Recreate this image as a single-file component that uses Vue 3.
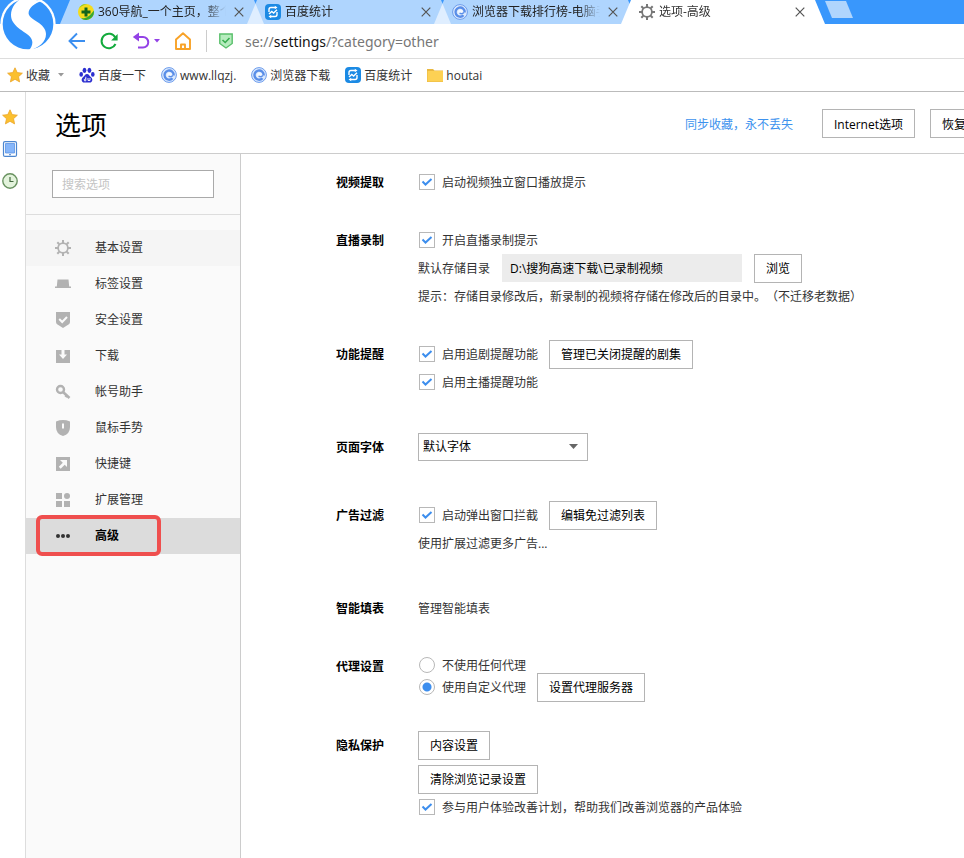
<script setup>
import { ref } from 'vue'

const tabs = [
  { icon: 'nav360', title: '360导航_一个主页，整个' },
  { icon: 'stats', title: '百度统计' },
  { icon: 'swirl', title: '浏览器下载排行榜-电脑手' },
  { icon: 'gear', title: '选项-高级', active: true },
]

const bookmarks = [
  { icon: 'star', title: '收藏', menu: true },
  { icon: 'paw', title: '百度一下' },
  { icon: 'swirl', title: 'www.llqzj.' },
  { icon: 'swirl', title: '浏览器下载' },
  { icon: 'stats', title: '百度统计' },
  { icon: 'folder', title: 'houtai' },
]

const categories = [
  { icon: 'gear', title: '基本设置', hover: true },
  { icon: 'tab', title: '标签设置' },
  { icon: 'shield', title: '安全设置' },
  { icon: 'download', title: '下载' },
  { icon: 'key', title: '帐号助手' },
  { icon: 'mouse', title: '鼠标手势' },
  { icon: 'shortcut', title: '快捷键' },
  { icon: 'grid', title: '扩展管理' },
  { icon: 'dots', title: '高级', current: true },
]

const keyword = ref('')
const videoPopup = ref(true)
const liveRecord = ref(true)
const savePath = ref('D:\\搜狗高速下载\\已录制视频')
const seriesReminder = ref(true)
const anchorReminder = ref(true)
const font = ref('默认字体')
const popupBlock = ref(true)
const proxy = ref('custom')
const experience = ref(true)
</script>

<template>
  <svg class="symbols" aria-hidden="true">
    <symbol id="i-nav360" viewBox="0 0 16 16">
      <circle cx="8" cy="8" r="8" fill="#f4dc1c" />
      <path d="M15.800 6.500A8 8 0 0 1 3 14.200C8 15 12 12 15.800 6.500z" fill="#38a832" />
      <path d="M1 4.500A8 8 0 0 1 9 .1C6 1 3 2.500 1 4.500z" fill="#8fca2a" />
      <path d="M6.500 3.500h3v3h3v3h-3v3h-3v-3h-3v-3h3z" fill="#12651c" />
    </symbol>
    <symbol id="i-stats" viewBox="0 0 16 16">
      <rect width="16" height="16" rx="4" fill="#1b8ae4" />
      <path d="M4 8V5.500q0-2 2-2h4M12 8v2.500q0 2-2 2H6" fill="none" stroke="#fff" stroke-width="1.400" />
      <path d="M9.800 1.800l2.700 1.700-2.700 1.800zM6.200 10.700l-2.700 1.800 2.700 1.700z" fill="#fff" />
      <path d="M4 10l2.800-2.500 1.800 1.500L12 5.800" fill="none" stroke="#fff" stroke-width="1.400" />
    </symbol>
    <symbol id="i-swirl" viewBox="0 0 16 16">
      <circle cx="8" cy="8" r="7.400" fill="#dceafd" stroke="#6b9bec" stroke-width="1" />
      <path d="M11.500 11.200A4.600 4.600 0 1 1 12.700 8.500" fill="none" stroke="#5a8ee8" stroke-width="2.400" />
      <circle cx="8.500" cy="8" r="2.400" fill="#f4f9ff" />
      <path d="M7.500 9.200q2.500 1.200 4.500-.7" fill="none" stroke="#5a8ee8" stroke-width="1.400" />
    </symbol>
    <symbol id="i-gear" viewBox="0 0 16 16">
      <g stroke="currentColor" fill="none">
        <circle cx="8" cy="8" r="4.900" stroke-width="1.800" />
        <path d="M8 0v3M8 13v3M0 8h3M13 8h3M2.300 2.300l2 2M11.700 11.700l2 2M2.300 13.700l2-2M11.700 4.300l2-2" stroke-width="2" />
      </g>
    </symbol>
    <symbol id="i-star" viewBox="0 0 16 16">
      <path d="M8 .8l2.200 4.800 5.200.6-3.900 3.500 1.100 5.200L8 12.300l-4.600 2.600 1.100-5.200L.6 6.200l5.200-.6z" fill="#fbc02f" stroke="#eba42a" stroke-width=".8" stroke-linejoin="round" />
    </symbol>
    <symbol id="i-paw" viewBox="0 0 16 16">
      <g fill="#2c2fd0">
        <ellipse cx="5.500" cy="3.300" rx="1.900" ry="2.600" />
        <ellipse cx="10.400" cy="3.300" rx="1.900" ry="2.600" />
        <ellipse cx="2.200" cy="7.400" rx="1.800" ry="2.400" />
        <ellipse cx="13.800" cy="7.400" rx="1.800" ry="2.400" />
        <path d="M8 7c2 0 2.500 2 4 3.200 2.400 1.900 1.400 5.300-1.200 5.300H5.200C2.600 15.500 1.600 12.100 4 10.200 5.500 9 6 7 8 7z" />
      </g>
      <path d="M6.800 9.800v4H5.500q-1.200-1.300 1.300-2.200M9 11v2.500h2V11" fill="none" stroke="#fff" stroke-width=".9" />
    </symbol>
    <symbol id="i-folder" viewBox="0 0 16 16">
      <path d="M0 2h6l1.500 1.500H16V15H0z" fill="#e9b840" />
      <path d="M.5 4H16v10.500H.5z" fill="#fdd154" />
    </symbol>
    <symbol id="i-tab" viewBox="0 0 16 16">
      <path d="M2.500 3.500h11l.7 7H16V12H0v-1.500h1.800z" fill="currentColor" />
    </symbol>
    <symbol id="i-shield" viewBox="0 0 16 16">
      <path d="M1 0h14v10q0 1.500-1.500 2.500L8 16l-5.500-3.500Q1 11.500 1 10z" fill="currentColor" />
      <path d="M4.200 7l3 3 4.800-5" fill="none" stroke="#fafafa" stroke-width="2" />
    </symbol>
    <symbol id="i-download" viewBox="0 0 16 16">
      <path d="M1 2h5.500v4.500H4L8 11l4-4.500H9.500V2H15v13H1z" fill="currentColor" />
    </symbol>
    <symbol id="i-key" viewBox="0 0 16 16">
      <circle cx="5.500" cy="5.500" r="3.500" fill="none" stroke="currentColor" stroke-width="2.400" />
      <path d="M8 8l6.500 6M10.500 13l2-2.200" fill="none" stroke="currentColor" stroke-width="2.600" />
    </symbol>
    <symbol id="i-mouse" viewBox="0 0 16 16">
      <path d="M1 1.500Q8-1.300 15 1.500V7q0 7-7 9-7-2-7-9z" fill="currentColor" />
      <path d="M7 3.500h2v5H7z" fill="#fafafa" />
    </symbol>
    <symbol id="i-shortcut" viewBox="0 0 16 16">
      <path d="M1 1h14v14H1z" fill="currentColor" />
      <path d="M5 4h7v7l-2.300-2.300-4 4-1.900-1.900 4-4z" fill="#fafafa" />
    </symbol>
    <symbol id="i-grid" viewBox="0 0 16 16">
      <path d="M1 1h6v6H1zM1 9h6v6H1zM9 9h6v6H9z" fill="currentColor" />
      <circle cx="12" cy="4" r="3" fill="currentColor" />
    </symbol>
    <symbol id="i-dots" viewBox="0 0 16 16">
      <g fill="#333"><circle cx="3" cy="8" r="2" /><circle cx="8" cy="8" r="2" /><circle cx="13" cy="8" r="2" /></g>
    </symbol>
  </svg>

  <div class="browser">
    <svg class="logo" viewBox="0 0 174 162" aria-label="搜狗浏览器" role="img">
      <circle cx="84" cy="72" r="83" fill="#fff" />
      <circle cx="84" cy="72" r="76" fill="#3393fb" />
      <path d="M128 2C100 10 84 26 86 42C90 60 138 70 138 102C138 126 118 142 84 154C98 140 102 124 90 110C74 94 32 78 33 44C34 22 46 8 62 -4z" fill="#fff" />
    </svg>

    <nav class="tabs" aria-label="标签页">
      <div v-for="tab in tabs" :key="tab.title" class="tab" :class="{ active: tab.active }">
        <svg class="icon"><use :href="'#i-' + tab.icon" /></svg>
        <span class="tab-title">{{ tab.title }}</span>
        <button class="close" aria-label="关闭">
          <svg viewBox="0 0 10 10"><path d="M.7.7l8.600 8.600M9.300.7L.7 9.300" stroke="#555" stroke-width="1.200" /></svg>
        </button>
      </div>
      <button class="new-tab" aria-label="新建标签"></button>
    </nav>

    <div class="toolbar">
      <button class="tool" aria-label="后退">
        <svg viewBox="0 0 18 18"><path d="M17 9H2M9 1.500L1.500 9 9 16.500" fill="none" stroke="#3b8ff0" stroke-width="1.900" /></svg>
      </button>
      <button class="tool" aria-label="刷新">
        <svg viewBox="0 0 18 18"><path d="M15.300 5.500A7.300 7.300 0 1 0 15.500 12" fill="none" stroke="#12aa3c" stroke-width="2" /><path d="M17.600 2v6.500h-6.500z" fill="#12aa3c" /></svg>
      </button>
      <button class="tool undo" aria-label="撤销">
        <svg viewBox="0 0 18 18"><path d="M4 5h7a5 5 0 0 1 0 10.500H6" fill="none" stroke="#9342e6" stroke-width="2" /><path d="M7 .5V9.500L.8 5z" fill="#9342e6" /></svg>
        <svg class="caret" viewBox="0 0 6 4"><path d="M0 0h6L3 3.500z" fill="#9342e6" /></svg>
      </button>
      <button class="tool" aria-label="主页">
        <svg viewBox="0 0 18 18"><path d="M2 7.500L9 1.200l7 6.300V17H2zM7 17v-4.500h4V17" fill="none" stroke="#f8a227" stroke-width="1.900" stroke-linejoin="round" /></svg>
      </button>
      <div class="address">
        <svg class="secure" viewBox="0 0 14 16"><path d="M.8 1h12.400v9.500L7 15 .8 10.500z" fill="#b6ecbe" stroke="#59bf6b" stroke-width="1.400" /><path d="M3.500 7l2.700 2.500L10.500 5" fill="none" stroke="#37ad4f" stroke-width="1.600" /></svg>
        <span class="url">se://<b>settings</b>/?category=other</span>
      </div>
    </div>

    <nav class="bookmarks" aria-label="收藏栏">
      <a v-for="mark in bookmarks" :key="mark.title" href="#" class="bookmark">
        <svg class="icon"><use :href="'#i-' + mark.icon" /></svg>
        <span>{{ mark.title }}</span>
        <svg v-if="mark.menu" class="caret" viewBox="0 0 6 4"><path d="M0 0h6L3 3.500z" fill="#999" /></svg>
      </a>
    </nav>

    <div class="body">
      <aside class="rail">
        <button aria-label="收藏"><svg class="icon"><use href="#i-star" /></svg></button>
        <button aria-label="手机">
          <svg class="icon" viewBox="0 0 16 16"><rect x="1.500" y=".6" width="13" height="14.800" rx="1.500" fill="#fff" stroke="#4d86cf" stroke-width="1.200" /><path d="M3.500 2.500h9v9.500h-9z" fill="#86b6fa" stroke="#5b93e3" stroke-width=".8" /><path d="M7 13.700h2" stroke="#4d86cf" /></svg>
        </button>
        <button aria-label="历史">
          <svg class="icon" viewBox="0 0 16 16"><circle cx="8" cy="8" r="7.200" fill="#e3f3dc" stroke="#699260" stroke-width="1.400" /><path d="M8 4v4.500h3.500" fill="none" stroke="#446a40" stroke-width="1.200" /></svg>
        </button>
      </aside>

      <div class="page">
        <header class="header">
          <h1>选项</h1>
          <div class="header-actions">
            <a href="#">同步收藏，永不丢失</a>
            <button class="btn">Internet选项</button>
            <button class="btn">恢复</button>
          </div>
        </header>

        <div class="columns">
          <aside class="sidebar">
            <div class="search">
              <input v-model="keyword" type="text" placeholder="搜索选项" aria-label="搜索选项" />
            </div>
            <nav class="menu" aria-label="设置分类">
              <a
                v-for="item in categories"
                :key="item.title"
                href="#"
                class="menu-item"
                :class="{ hover: item.hover, current: item.current }"
              >
                <svg class="icon"><use :href="'#i-' + item.icon" /></svg>
                <span>{{ item.title }}</span>
              </a>
            </nav>
          </aside>

          <main class="settings">
            <section class="group">
              <h2>视频提取</h2>
              <div class="rows">
                <div class="row">
                  <label class="choice"><input v-model="videoPopup" type="checkbox" /><span class="text">启动视频独立窗口播放提示</span></label>
                </div>
              </div>
            </section>

            <section class="group">
              <h2>直播录制</h2>
              <div class="rows">
                <div class="row">
                  <label class="choice"><input v-model="liveRecord" type="checkbox" /><span class="text">开启直播录制提示</span></label>
                </div>
                <div class="row">
                  <label class="text" for="save-path">默认存储目录</label>
                  <input id="save-path" v-model="savePath" class="path" type="text" readonly />
                  <button class="btn">浏览</button>
                </div>
                <div class="row">
                  <span class="text">提示：存储目录修改后，新录制的视频将存储在修改后的目录中。（不迁移老数据）</span>
                </div>
              </div>
            </section>

            <section class="group">
              <h2>功能提醒</h2>
              <div class="rows">
                <div class="row">
                  <label class="choice"><input v-model="seriesReminder" type="checkbox" /><span class="text">启用追剧提醒功能</span></label>
                  <button class="btn">管理已关闭提醒的剧集</button>
                </div>
                <div class="row">
                  <label class="choice"><input v-model="anchorReminder" type="checkbox" /><span class="text">启用主播提醒功能</span></label>
                </div>
              </div>
            </section>

            <section class="group roomy">
              <h2><label for="page-font">页面字体</label></h2>
              <div class="rows">
                <div class="row">
                  <div class="select">
                    <select id="page-font" v-model="font"><option>默认字体</option></select>
                    <svg viewBox="0 0 9 5"><path d="M0 0h9L4.500 5z" fill="#666" /></svg>
                  </div>
                </div>
              </div>
            </section>

            <section class="group wide">
              <h2>广告过滤</h2>
              <div class="rows">
                <div class="row">
                  <label class="choice"><input v-model="popupBlock" type="checkbox" /><span class="text">启动弹出窗口拦截</span></label>
                  <button class="btn">编辑免过滤列表</button>
                </div>
                <div class="row"><a class="text" href="#">使用扩展过滤更多广告...</a></div>
              </div>
            </section>

            <section class="group roomy">
              <h2>智能填表</h2>
              <div class="rows">
                <div class="row"><a class="text" href="#">管理智能填表</a></div>
              </div>
            </section>

            <section class="group">
              <h2>代理设置</h2>
              <div class="rows">
                <div class="row short">
                  <label class="choice"><input v-model="proxy" type="radio" name="proxy" value="none" /><span class="text">不使用任何代理</span></label>
                </div>
                <div class="row">
                  <label class="choice"><input v-model="proxy" type="radio" name="proxy" value="custom" /><span class="text">使用自定义代理</span></label>
                  <button class="btn">设置代理服务器</button>
                </div>
              </div>
            </section>

            <section class="group">
              <h2>隐私保护</h2>
              <div class="rows">
                <div class="row spaced"><button class="btn">内容设置</button></div>
                <div class="row"><button class="btn">清除浏览记录设置</button></div>
                <div class="row">
                  <label class="choice"><input v-model="experience" type="checkbox" /><span class="text">参与用户体验改善计划，帮助我们改善浏览器的产品体验</span></label>
                </div>
              </div>
            </section>
          </main>
        </div>
      </div>
    </div>
  </div>
</template>

<style>
body {
  margin: 0;
  overflow-x: hidden;
}
</style>

<style scoped>
.symbols {
  position: absolute;
  width: 0;
  height: 0;
}
.browser {
  position: relative;
  display: flex;
  flex-direction: column;
  min-height: 100vh;
  background: #fff;
  color: #333;
  font: 12px/20px "Open Sans", "Noto Sans CJK SC", sans-serif;
  text-spacing-trim: space-all;
}
button,
input,
select {
  box-sizing: border-box;
  margin: 0;
  font: inherit;
  color: inherit;
}
button {
  padding: 0;
  border: 0;
  background: none;
}
a {
  color: inherit;
  text-decoration: none;
}
.icon {
  flex: none;
  width: 16px;
  height: 16px;
}
.logo {
  position: absolute;
  z-index: 2;
  top: 0;
  left: 0;
  width: 58px;
  height: 54px;
}

/* Tab strip */
.tabs {
  display: flex;
  height: 24px;
  padding-left: 60px;
  background: #3997fc;
}
.tab {
  display: flex;
  flex: 0 1 204px;
  box-sizing: border-box;
  min-width: 0;
  align-items: center;
  gap: 4px;
  padding: 0 20px 0 18px;
  background: rgba(255, 255, 255, 0.6);
  clip-path: polygon(10px 0, calc(100% - 10px) 0, 100% 100%, 0 100%);
  color: #222;
}
.tab + .tab {
  margin-left: -17px;
}
.tab.active {
  background: #fff;
  color: #333;
}
.tab .icon {
  color: #777;
}
.tab-title {
  flex: 1;
  overflow: hidden;
  white-space: nowrap;
  mask-image: linear-gradient(to right, #000 calc(100% - 26px), transparent calc(100% - 4px));
}
.close,
.close svg {
  display: block;
  flex: none;
  width: 10px;
  height: 10px;
}
.new-tab {
  width: 28px;
  height: 17px;
  margin-top: 1px;
  background: #b0d5fd;
  clip-path: polygon(0 0, 21px 0, 28px 100%, 7px 100%);
}

/* Toolbar */
.toolbar {
  display: flex;
  align-items: center;
  gap: 14px;
  height: 34px;
  padding-left: 68px;
  border-bottom: 1px solid #ddd;
}
.tool {
  display: flex;
  align-items: center;
  gap: 4px;
}
.tool svg {
  width: 18px;
  height: 18px;
}
.tool .caret,
.caret {
  width: 6px;
  height: 4px;
}
.address {
  display: flex;
  flex: 1;
  align-items: center;
  gap: 12px;
  height: 22px;
  padding-left: 12px;
  border-left: 1px solid #ccc;
}
.secure {
  width: 14px;
  height: 16px;
}
.url {
  padding-top: 2px;
  color: #777;
  font-family: "Noto Sans", sans-serif;
  font-size: 14px;
}
.url b {
  color: #111;
  font-weight: 400;
}

/* Bookmarks */
.bookmarks {
  display: flex;
  align-items: center;
  gap: 15px;
  height: 32px;
  padding-left: 7px;
  border-bottom: 1px solid #bbb;
}
.bookmark {
  display: flex;
  align-items: center;
  gap: 3px;
  white-space: nowrap;
}
.bookmark span {
  padding-top: 2px;
}
.bookmark .caret {
  margin-left: 5px;
}

/* Body */
.body {
  display: flex;
  flex: 1;
}
.rail {
  display: flex;
  flex: none;
  flex-direction: column;
  gap: 16px;
  width: 23px;
  padding: 17px 0 0 2px;
  border-right: 1px solid #ddd;
}
.rail button,
.rail svg {
  display: block;
  width: 16px;
  height: 16px;
}
.page {
  display: flex;
  flex: 1;
  flex-direction: column;
  min-width: 0;
}
.header {
  display: flex;
  align-items: center;
  justify-content: space-between;
  height: 59px;
  overflow: hidden;
  padding: 2px 0 0 29px;
  border-bottom: 1px solid #ccc;
}
h1 {
  margin: 0;
  padding-top: 2px;
  color: #000;
  font-size: 26px;
  font-weight: 400;
  line-height: 36px;
}
.header-actions {
  display: flex;
  flex: none;
  align-items: center;
  margin-right: -14px;
}
.header-actions a {
  margin-right: 14px;
  padding-top: 2px;
  color: #3d92ee;
}
.header-actions .btn {
  margin-left: 15px;
}
.btn {
  flex: none;
  height: 29px;
  padding: 2px 11px 0;
  border: 1px solid #b4b4b4;
  background: #fff;
  color: #000;
  white-space: nowrap;
}
.columns {
  display: flex;
  flex: 1;
}

/* Sidebar */
.sidebar {
  flex: none;
  width: 214px;
  border-right: 1px solid #ccc;
  background: #fafafa;
}
.search {
  padding: 16px 26px;
  border-bottom: 1px solid #ddd;
}
.search input {
  display: block;
  width: 100%;
  height: 28px;
  padding: 0 9px;
  border: 1px solid #aaa;
  background: #fff;
}
.search input::placeholder {
  color: #c4c4c4;
}
.menu {
  padding-top: 15px;
}
.menu-item {
  position: relative;
  display: flex;
  align-items: center;
  gap: 24px;
  height: 36px;
  padding-left: 29px;
}
.menu-item .icon {
  color: #b2b2b2;
}
.menu-item.hover {
  background: #f5f5f5;
}
.menu-item.current {
  background: #dcdcdc;
  color: #000;
  font-weight: 700;
}
.menu-item.current::after {
  position: absolute;
  top: -3px;
  left: 10px;
  box-sizing: border-box;
  width: 125px;
  height: 41px;
  border: 4px solid #ef4f4e;
  border-radius: 6px;
  content: "";
}

/* Settings */
.settings {
  flex: 1;
  min-width: 0;
  padding: 14px 0 30px 95px;
}
.group {
  display: flex;
}
.group + .group {
  margin-top: 30px;
}
.group + .group.roomy {
  margin-top: 37px;
}
.group + .group.wide {
  margin-top: 40px;
}
h2 {
  flex: none;
  width: 82px;
  height: 28px;
  margin: 0;
  color: #000;
  font-size: 12px;
  font-weight: 700;
  line-height: 30px;
}
.rows {
  flex: 1;
  min-width: 0;
}
.row {
  display: flex;
  align-items: center;
  gap: 12px;
  height: 28px;
  white-space: nowrap;
}
.row.short {
  height: 22px;
  padding-top: 2px;
  margin-bottom: -3px;
}
.row.spaced {
  margin-bottom: 6px;
}
.text {
  padding-top: 2px;
}
.choice {
  display: flex;
  align-items: center;
  gap: 7px;
  padding-left: 1px;
}
.choice + .btn {
  margin-left: -1px;
}
.choice input {
  flex: none;
  width: 16px;
  height: 16px;
  border: 1px solid #b8b8b8;
  background: #fff;
  appearance: none;
}
.choice input[type="radio"] {
  border-radius: 50%;
}
.choice input[type="checkbox"]:checked {
  background: url("data:image/svg+xml,%3Csvg xmlns='http://www.w3.org/2000/svg' viewBox='0 0 14 14'%3E%3Cpath d='M2.500 6.500l3 3L11.500 4' fill='none' stroke='%233d8eee' stroke-width='2'/%3E%3C/svg%3E") center / 14px;
}
.choice input[type="radio"]:checked {
  background: radial-gradient(circle, #3d8eee 4px, #fff 5px);
}
.path {
  width: 240px;
  height: 28px;
  padding: 0 8px;
  border: 0;
  background: #ececec;
  color: #000;
}
.select {
  position: relative;
  width: 170px;
}
.select select {
  display: block;
  width: 100%;
  height: 28px;
  padding: 0 4px;
  border: 1px solid #b4b4b4;
  border-radius: 0;
  background: #fff;
  color: #000;
  appearance: none;
}
.select svg {
  position: absolute;
  top: 11px;
  right: 10px;
  width: 9px;
  height: 5px;
  pointer-events: none;
}
</style>
